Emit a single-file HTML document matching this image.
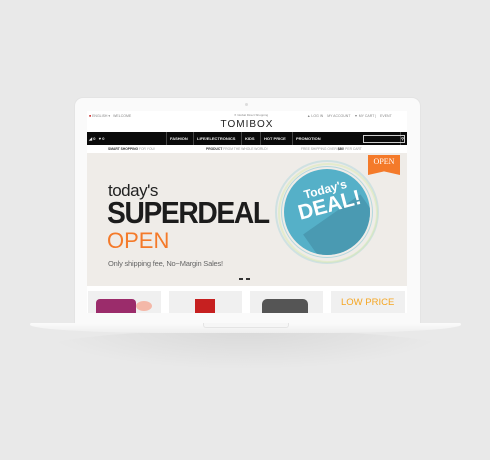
<!DOCTYPE html><html><head><style>
body{margin:0;width:490px;height:460px;background:#e9e9e9;position:relative;overflow:hidden;font-family:"Liberation Sans",sans-serif}
.a{position:absolute}
</style></head><body>
<div class="a" style="left:40px;top:330px;width:410px;height:40px;border-radius:50%;background:radial-gradient(ellipse at center top,rgba(0,0,0,.07),rgba(0,0,0,0) 70%)"></div>
<div class="a" style="left:74px;top:97px;width:345px;height:228px;background:#fafafa;border-radius:9px 9px 0 0;border:1px solid #e4e4e4"></div>
<div class="a" style="left:245px;top:103px;width:3px;height:3px;border-radius:50%;background:#ddd"></div>
<div class="a" style="left:30px;top:323px;width:431px;height:10px;background:linear-gradient(#fbfbfb,#eeeeee);border-radius:2px 2px 40% 40%/2px 2px 100% 100%"></div>
<div class="a" style="left:203px;top:323px;width:84px;height:4px;background:#f6f6f6;border:1px solid #e4e4e4;border-top:none;border-radius:0 0 3px 3px"></div>
<div class="a" style="left:87px;top:111px;width:320px;height:202px;background:#fff;overflow:hidden">
 <div class="a" style="left:2px;top:3px;font-size:3.5px;color:#888"><span style="color:#c33">■</span> ENGLISH ▾ &nbsp; WELCOME</div>
 <div class="a" style="left:147px;top:2px;font-size:3px;color:#888">✕ Global Direct Shopping</div>
 <div class="a" style="left:220px;top:3px;font-size:3.5px;color:#888">▲ LOG IN &nbsp;&nbsp; MY ACCOUNT &nbsp;&nbsp; ▼ MY CART | &nbsp;&nbsp; EVENT</div>
 <div class="a" style="left:0;width:320px;top:8px;text-align:center;font-size:10px;letter-spacing:1px;color:#222">TOMIBOX</div>
 <div class="a" style="left:0;top:21px;width:320px;height:13px;background:#0a0a0a;color:#eee;font-size:4px;font-weight:bold">
  <span class="a" style="left:2px;top:4px">◢ 0 &nbsp; ♥ 0</span>
  <span class="a" style="left:79px;top:0;height:13px;border-left:1px solid #444;border-right:1px solid #444;width:233px"></span>
  <span class="a" style="left:83px;top:4px">FASHION</span>
  <span class="a" style="left:106px;top:0;height:13px;border-left:1px solid #444"></span>
  <span class="a" style="left:110px;top:4px">LIFE/ELECTRONICS</span>
  <span class="a" style="left:154px;top:0;height:13px;border-left:1px solid #444"></span>
  <span class="a" style="left:158px;top:4px">KIDS</span>
  <span class="a" style="left:173px;top:0;height:13px;border-left:1px solid #444"></span>
  <span class="a" style="left:177px;top:4px">HOT PRICE</span>
  <span class="a" style="left:205px;top:0;height:13px;border-left:1px solid #444"></span>
  <span class="a" style="left:209px;top:4px">PROMOTION</span>
  <span class="a" style="left:276px;top:3px;width:40px;height:6px;border:1px solid #ccc;text-align:right;font-size:4px;line-height:6px">⚲</span>
 </div>
 <div class="a" style="left:0;top:36px;width:320px;font-size:3.3px;color:#999">
  <span class="a" style="left:21px"><b style="color:#333">SMART SHOPPING</b> FOR YOU!</span>
  <span class="a" style="left:119px"><b style="color:#333">PRODUCT</b> FROM THE WHOLE WORLD!</span>
  <span class="a" style="left:214px">FREE SHIPPING OVER <b style="color:#333">$80!</b> PER CART</span>
 </div>
 <div class="a" style="left:0;top:42px;width:320px;height:133px;background:#efece8">
  <div class="a" style="left:21px;top:28px;font-size:17px;color:#222;letter-spacing:-0.5px">today's</div>
  <div class="a" style="left:20px;top:42px;font-size:31px;font-weight:bold;color:#1c1c1c;letter-spacing:-1.5px;transform:scaleX(.91);transform-origin:left">SUPERDEAL</div>
  <div class="a" style="left:20px;top:75px;font-size:22px;color:#f47a2a">OPEN</div>
  <div class="a" style="left:21px;top:106px;font-size:7.5px;color:#666;letter-spacing:-0.2px">Only shipping fee, No−Margin Sales!</div>
  <div class="a" style="left:152px;top:125px;width:4px;height:1.5px;background:#333"></div>
  <div class="a" style="left:159px;top:125px;width:4px;height:1.5px;background:#333"></div>
  <div class="a" style="left:188px;top:7px;width:104px;height:104px;border-radius:50%;border:2px solid rgba(150,205,215,.35);box-sizing:border-box"></div>
  <div class="a" style="left:191px;top:10px;width:100px;height:100px;border-radius:50%;border:2px solid rgba(215,235,170,.45);box-sizing:border-box"></div>
  <div class="a" style="left:194px;top:13px;width:92px;height:92px;border-radius:50%;border:1px solid rgba(120,195,210,.5);box-sizing:border-box"></div>
  <div class="a" style="left:197px;top:16px;width:86px;height:86px;border-radius:50%;background:#55b0c8;overflow:hidden">
   <div class="a" style="left:30px;top:40px;width:70px;height:60px;background:#4a9ab2;transform:rotate(-35deg)"></div>
  </div>
  <div class="a" style="left:201px;top:30px;width:80px;text-align:center;color:#fff;font-weight:bold;transform:rotate(-15deg);line-height:1">
   <div style="font-size:12px">Today's</div><div style="font-size:21px">DEAL!</div></div>
  <div class="a" style="left:281px;top:2px;width:32px;height:20px;background:#f47a2a;clip-path:polygon(0 0,100% 0,100% 100%,50% 82%,0 100%)"></div>
  <div class="a" style="left:281px;top:4px;width:32px;text-align:center;font-family:'Liberation Serif',serif;font-size:8px;color:#fff">OPEN</div>
 </div>
 <div class="a" style="left:1px;top:180px;width:73px;height:30px;background:#f0f0f0;overflow:hidden"><div class="a" style="left:8px;top:8px;width:40px;height:20px;background:#9b2c6b;border-radius:4px"></div><div class="a" style="left:48px;top:10px;width:16px;height:10px;background:#f4b8a8;border-radius:50%"></div></div>
 <div class="a" style="left:82px;top:180px;width:73px;height:30px;background:#f0f0f0;overflow:hidden"><div class="a" style="left:26px;top:8px;width:20px;height:20px;background:#c62020"></div></div>
 <div class="a" style="left:163px;top:180px;width:73px;height:30px;background:#f0f0f0;overflow:hidden"><div class="a" style="left:12px;top:8px;width:46px;height:20px;background:#555;border-radius:5px"></div></div>
 <div class="a" style="left:244px;top:180px;width:74px;height:30px;background:#f0f0f0;overflow:hidden"><div class="a" style="left:10px;top:6px;font-size:9.5px;color:#f5a623">LOW PRICE</div></div>
</div>
</body></html>
